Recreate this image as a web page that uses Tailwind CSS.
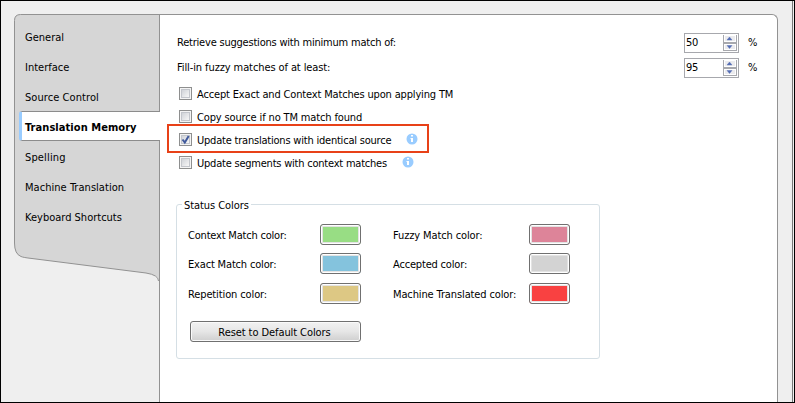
<!DOCTYPE html>
<html lang="en">
<head>
<meta charset="utf-8">
<title>Translation Memory</title>
<script src="https://cdn.jsdelivr.net/npm/@tailwindcss/browser@4"></script>
</head>
<body class="w-[795px] h-[403px] overflow-hidden font-['DejaVu_Sans_Condensed','DejaVu_Sans',sans-serif] text-[11px] leading-[15px] text-black whitespace-nowrap">
<div class="flex h-[403px] w-[795px] border border-black bg-[#efefef] pt-[13px] pl-[13px]">
  <nav class="relative h-[275px] w-[145px] shrink-0 pt-2">
    <svg class="absolute top-0 left-0" width="145" height="275" fill="none">
      <path d="M145 .5H6.500Q.5 .5 .5 6.500V229Q.5 240 7 242.500Q9 243.500 18 244.500L132 259Q145 261 145 267Z" fill="#d6d6d6"/>
      <path d="M145 .5H6.500Q.5 .5 .5 6.500V229Q.5 240 7 242.500Q9 243.500 18 244.500L132 259Q144.500 261 144.500 267" stroke="#929292"/>
    </svg>
    <ul class="relative">
      <li class="flex h-[30px] items-center pl-[11px]"><span>General</span></li>
      <li class="flex h-[30px] items-center pl-[11px]"><span>Interface</span></li>
      <li class="flex h-[30px] items-center pl-[11px]"><span class="tracking-[0.07px]">Source Control</span></li>
      <li class="flex h-[30px] items-center pl-[5px]"><span class="relative -top-px z-10 flex h-[30px] w-[141px] shrink-0 items-center rounded-l-[3px] border border-r-0 border-[#8c8c8c] border-l-[3px] border-l-[#99ccff] bg-white pl-[3px] font-bold"><span class="pt-0.5 tracking-[0.06px]">Translation Memory</span></span></li>
      <li class="flex h-[30px] items-center pl-[11px]"><span class="tracking-[0.15px]">Spelling</span></li>
      <li class="flex h-[30px] items-center pl-[11px]"><span class="tracking-[0.04px]">Machine Translation</span></li>
      <li class="flex h-[30px] items-center pl-[11px]"><span>Keyboard Shortcuts</span></li>
    </ul>
  </nav>
  <main class="h-[388px] w-[619px] shrink-0 rounded-tr-[6px] border border-b-0 border-[#929292] bg-white pt-[18px]">
    <div class="flex h-5 items-center pl-[17px]">
      <span class="w-[507px] pb-px tracking-[-0.21px]">Retrieve suggestions with minimum match of:</span>
      <div class="flex h-5 w-[55px] border border-[#a7a8ad] pl-px"><span class="w-[37px] pt-px tracking-[-0.3px]">50</span>
        <svg width="14" height="18" class="shrink-0"><path d="M0 1H14V17H0Z" fill="#a7a8ad"/><path d="M1 1H13V8H1ZM1 10H13V16H1Z" fill="#fff"/><path d="M2 2H12V7H2ZM2 11H12V15H2Z" fill="#ebebee"/><path d="M4 6L6.500 3L9 6ZM4 11.500L6.500 14.500L9 11.500Z" fill="#536cb4" stroke="#536cb4" stroke-width=".4"/></svg>
      </div><span class="ml-[9px] pb-px">%</span>
    </div>
    <div class="mt-[5px] flex h-5 items-center pl-[17px]">
      <span class="w-[507px] pb-px tracking-[-0.1px]">Fill-in fuzzy matches of at least:</span>
      <div class="flex h-5 w-[55px] border border-[#a7a8ad] pl-px"><span class="w-[37px] pt-px tracking-[-0.3px]">95</span>
        <svg width="14" height="18" class="shrink-0"><path d="M0 1H14V17H0Z" fill="#a7a8ad"/><path d="M1 1H13V8H1ZM1 10H13V16H1Z" fill="#fff"/><path d="M2 2H12V7H2ZM2 11H12V15H2Z" fill="#ebebee"/><path d="M4 6L6.500 3L9 6ZM4 11.500L6.500 14.500L9 11.500Z" fill="#536cb4" stroke="#536cb4" stroke-width=".4"/></svg>
      </div><span class="ml-[9px] pb-px">%</span>
    </div>
    <div class="relative mt-1 pl-[19px]">
      <div class="flex h-[23px] items-center gap-[5px]"><i class="flex size-[13px] border border-[#8e8f8f] bg-[#f4f4f4] p-px"><i class="size-[9px] border border-[#c3c6cc] bg-linear-to-br from-[#d0d3d8] to-[#f7f7f7]"></i></i><span class="pt-0.5 tracking-[-0.16px]">Accept Exact and Context Matches upon applying TM</span></div>
      <div class="flex h-[23px] items-center gap-[5px]"><i class="flex size-[13px] border border-[#8e8f8f] bg-[#f4f4f4] p-px"><i class="size-[9px] border border-[#c3c6cc] bg-linear-to-br from-[#d0d3d8] to-[#f7f7f7]"></i></i><span class="pt-0.5 tracking-[-0.14px]">Copy source if no TM match found</span></div>
      <div class="flex h-[23px] items-center gap-[5px]"><i class="relative flex size-[13px] border border-[#8e8f8f] bg-[#f4f4f4] p-px"><i class="size-[9px] border border-[#c3c6cc] bg-linear-to-br from-[#d0d3d8] to-[#f7f7f7]"></i><svg class="absolute -top-px -left-px" width="13" height="13"><path d="M3.500 6.500L5.800 9.500L9.700 3" fill="none" stroke="#40599c" stroke-width="2"/></svg></i><span class="w-[204px] pt-0.5 tracking-[-0.21px]">Update translations with identical source</span><svg width="12" height="12" class="-mt-0.5"><circle cx="6" cy="6" r="5.500" fill="#99ccff"/><path d="M5 2h2v1.500H5ZM4.500 5H7v4H5V6h-.5Z" fill="#fff"/></svg></div>
      <div class="flex h-[23px] items-center gap-[5px]"><i class="flex size-[13px] border border-[#8e8f8f] bg-[#f4f4f4] p-px"><i class="size-[9px] border border-[#c3c6cc] bg-linear-to-br from-[#d0d3d8] to-[#f7f7f7]"></i></i><span class="w-[200px] pt-0.5 tracking-[-0.22px]">Update segments with context matches</span><svg width="12" height="12" class="-mt-0.5"><circle cx="6" cy="6" r="5.500" fill="#99ccff"/><path d="M5 2h2v1.500H5ZM4.500 5H7v4H5V6h-.5Z" fill="#fff"/></svg></div>
      <div class="absolute top-[42px] left-[7px] h-[29px] w-[262px] border-2 border-[#e84118]"></div>
    </div>
    <section class="relative mt-[30px] ml-4 h-[155px] w-[424px] rounded-[3px] border border-[#d5dfe5] pt-[19px] pl-[11px]">
      <h2 class="absolute -top-[7px] left-[5px] bg-white px-0.5 tracking-[-0.07px]">Status Colors</h2>
      <div class="grid grid-cols-[132px_73px_136px_41px] grid-rows-[21px_21px_21px] items-center gap-y-2">
        <span class="pt-0.5 tracking-[-0.2px]">Context Match color:</span><b class="h-[21px] w-[41px] rounded-[3px] border border-[#707070] bg-[#98dd84] shadow-[inset_0_0_0_1px_#fff,inset_0_0_0_2px_#e3e3e3]"></b>
        <span class="pt-0.5 tracking-[-0.12px]">Fuzzy Match color:</span><b class="h-[21px] w-[41px] rounded-[3px] border border-[#707070] bg-[#dd8499] shadow-[inset_0_0_0_1px_#fff,inset_0_0_0_2px_#e3e3e3]"></b>
        <span class="pt-0.5 tracking-[-0.17px]">Exact Match color:</span><b class="h-[21px] w-[41px] rounded-[3px] border border-[#707070] bg-[#84c3dd] shadow-[inset_0_0_0_1px_#fff,inset_0_0_0_2px_#e3e3e3]"></b>
        <span class="pt-0.5 tracking-[-0.18px]">Accepted color:</span><b class="h-[21px] w-[41px] rounded-[3px] border border-[#707070] bg-[#d3d3d3] shadow-[inset_0_0_0_1px_#fff,inset_0_0_0_2px_#e3e3e3]"></b>
        <span class="pt-1 tracking-[-0.12px]">Repetition color:</span><b class="relative top-px h-[21px] w-[41px] rounded-[3px] border border-[#707070] bg-[#ddc884] shadow-[inset_0_0_0_1px_#fff,inset_0_0_0_2px_#e3e3e3]"></b>
        <span class="pt-1 tracking-[-0.12px]">Machine Translated color:</span><b class="relative top-px h-[21px] w-[41px] rounded-[3px] border border-[#707070] bg-[#f94141] shadow-[inset_0_0_0_1px_#fff,inset_0_0_0_2px_#e3e3e3]"></b>
      </div>
      <button class="mt-[18px] ml-0.5 flex h-[21px] w-[171px] items-center justify-center rounded-[3px] border border-[#707070] bg-linear-to-b from-[#f2f2f2] from-0% via-[#e6e6e6] via-50% to-[#cfcfcf] shadow-[inset_0_0_0_1px_#fafafa]"><span class="pt-0.5 pr-0.5 tracking-[-0.08px]">Reset to Default Colors</span></button>
    </section>
  </main>
  <div class="ml-[14px] -mt-[13px] h-[401px] w-[2px] border-l border-[#777] bg-[#efefef]"></div>
</div>
</body>
</html>
